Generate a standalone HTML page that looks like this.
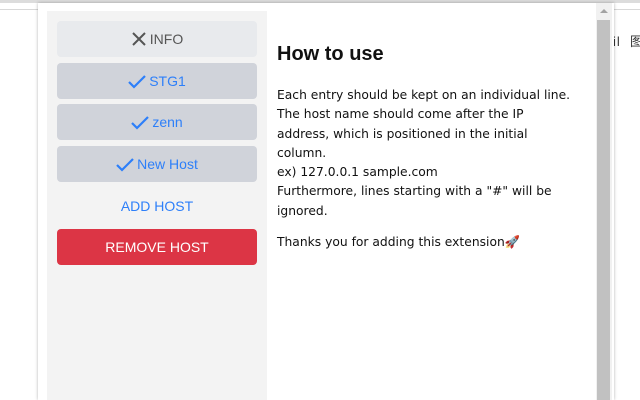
<!DOCTYPE html>
<html><head><meta charset="utf-8"><style>
*{margin:0;padding:0;box-sizing:border-box}
html,body{width:640px;height:400px;overflow:hidden}
body{background:#fff;position:relative;font-family:"Liberation Sans",sans-serif}
.topbar{position:absolute;left:0;top:0;width:640px;height:3px;background:#dcdcdc}
.line{position:absolute;height:1px;background:#d8d8d8}
.popup{position:absolute;left:38px;top:3px;width:576px;height:397px;overflow:hidden;background:#fff;box-shadow:0 0 3px rgba(0,0,0,.3)}
.side{position:absolute;left:9px;top:8px;width:220px;height:389px;background:#f3f3f3}
.btn{position:absolute;left:10px;width:200px;height:36px;border-radius:4px;background:#d0d3da;color:#2d7ff9;font-size:14px;display:flex;align-items:center;justify-content:center;gap:3px}
.btn svg{display:block}
.info{background:#e8eaed;color:#555}
.add{position:absolute;left:10px;width:200px;top:187px;text-align:center;color:#2d7ff9;font-size:14px}
.rm{background:#dc3545;color:#fff}
.main{position:absolute;left:239px;top:38px;width:305px;font-family:"DejaVu Sans",sans-serif;color:#111}
h1{font-family:"Liberation Sans",sans-serif;font-size:20px;font-weight:bold;margin-bottom:20px;margin-top:2px}
p{font-size:12.3px;line-height:19.3px}
.sb{position:absolute;left:558px;top:0;width:16px;height:397px;background:#f1f1f1}
.thumb{position:absolute;left:1px;top:17px;width:13px;height:380px;background:#c1c1c1}
.arr{position:absolute;left:4px;top:6px;border:4px solid transparent;border-bottom:4px solid #a3a3a3;border-top:0}
.bgtxt{position:absolute;left:613px;top:31px;font-size:13px;color:#333;white-space:nowrap;letter-spacing:1px}
</style></head><body>
<div class="topbar"></div>
<div class="line" style="left:0;top:9px;width:38px"></div>
<div class="line" style="left:614px;top:9px;width:26px"></div>
<div class="bgtxt">il &nbsp;&#22270;</div>
<div class="popup">
 <div class="side">
  <div class="btn info" style="top:10px"><svg width="16" height="16" viewBox="0 0 16 16"><path d="M2 2L14 14M14 2L2 14" stroke="#555" stroke-width="2"/></svg>INFO</div>
  <div class="btn" style="top:52px"><svg width="18" height="16" viewBox="0 0 18 16"><path d="M1 9L6 14L17 3" stroke="#2d7ff9" stroke-width="2.2" fill="none"/></svg>STG1</div>
  <div class="btn" style="top:93px"><svg width="18" height="16" viewBox="0 0 18 16"><path d="M1 9L6 14L17 3" stroke="#2d7ff9" stroke-width="2.2" fill="none"/></svg>zenn</div>
  <div class="btn" style="top:135px"><svg width="18" height="16" viewBox="0 0 18 16"><path d="M1 9L6 14L17 3" stroke="#2d7ff9" stroke-width="2.2" fill="none"/></svg>New Host</div>
  <div class="add">ADD HOST</div>
  <div class="btn rm" style="top:218px">REMOVE HOST</div>
 </div>
 <div class="main">
  <h1>How to use</h1>
  <p>Each entry should be kept on an individual line.<br>The host name should come after the IP<br>address, which is positioned in the initial<br>column.<br>ex) 127.0.0.1 sample.com<br>Furthermore, lines starting with a "#" will be<br>ignored.</p>
  <p style="margin-top:12px">Thanks you for adding this extension🚀</p>
 </div>
 <div class="sb"><div class="arr"></div><div class="thumb"></div></div>
</div>
</body></html>
